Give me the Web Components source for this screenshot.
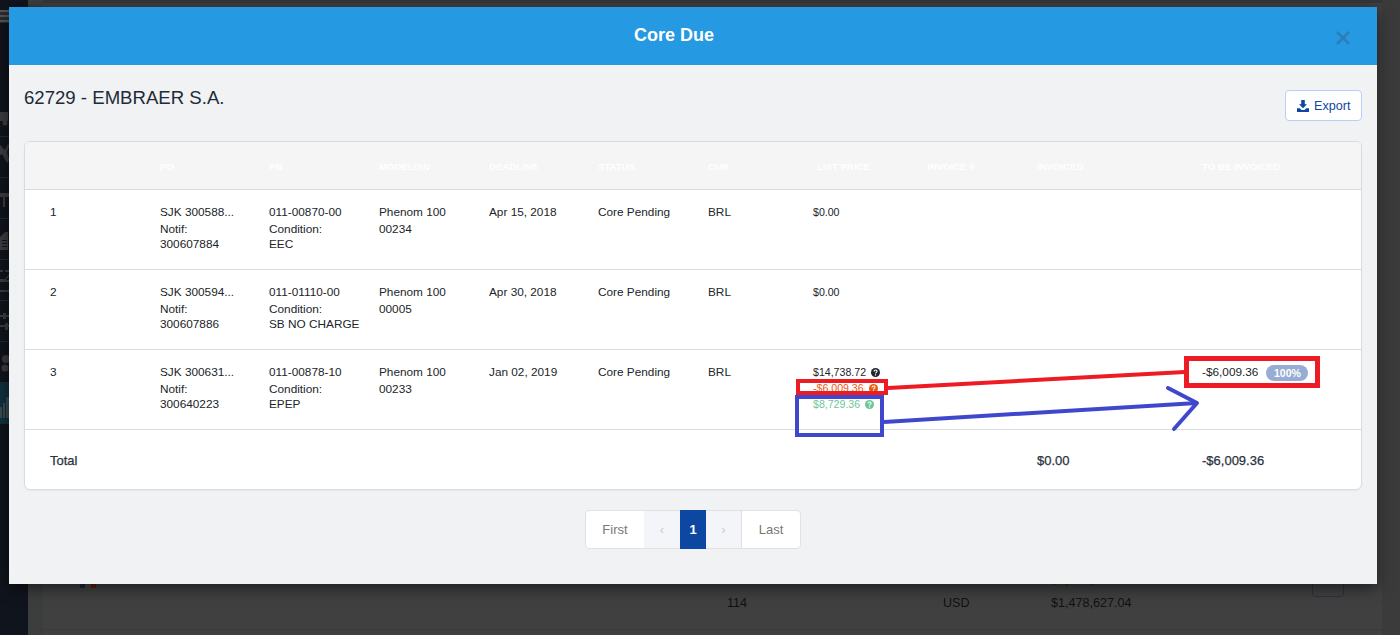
<!DOCTYPE html>
<html lang="en">
<head>
<meta charset="utf-8">
<title>Core Due</title>
<style>
    html, body { margin: 0; height: 100%; overflow: hidden; }
    body { font-family: "Liberation Sans", Arial, sans-serif; background: #404040; }
</style>
</head>
<body>
<app-backdrop>
    <side-item slot="side" shape="truck"></side-item>
    <side-item slot="side" shape="plane"></side-item>
    <side-item slot="side" shape="tool"></side-item>
    <side-item slot="side" shape="doc"></side-item>
    <side-item slot="side" shape="swap"></side-item>
    <side-item slot="side" shape="sliders"></side-item>
    <side-item slot="side" shape="gears"></side-item>
    <side-item slot="side" shape="chart" active></side-item>
</app-backdrop>

<core-modal heading="Core Due">
    <modal-toolbar title-text="62729 - EMBRAER S.A."></modal-toolbar>
    <core-card>
        <core-row kind="head">
            <row-cell></row-cell>
            <row-cell>PO</row-cell>
            <row-cell>PN</row-cell>
            <row-cell>Model/SN</row-cell>
            <row-cell>Deadline</row-cell>
            <row-cell>Status</row-cell>
            <row-cell>Cur</row-cell>
            <row-cell inset>List price</row-cell>
            <row-cell>Invoice #</row-cell>
            <row-cell>Invoiced</row-cell>
            <row-cell>To be invoiced</row-cell>
        </core-row>
        <core-row>
            <row-cell>1</row-cell>
            <row-cell>SJK 300588...<span slot="sub">Notif:<br>300607884</span></row-cell>
            <row-cell>011-00870-00<span slot="sub">Condition:<br>EEC</span></row-cell>
            <row-cell>Phenom 100<span slot="sub">00234</span></row-cell>
            <row-cell>Apr 15, 2018</row-cell>
            <row-cell>Core Pending</row-cell>
            <row-cell>BRL</row-cell>
            <row-cell compact><price-line plain>$0.00</price-line></row-cell>
            <row-cell></row-cell>
            <row-cell></row-cell>
            <row-cell></row-cell>
        </core-row>
        <core-row>
            <row-cell>2</row-cell>
            <row-cell>SJK 300594...<span slot="sub">Notif:<br>300607886</span></row-cell>
            <row-cell>011-01110-00<span slot="sub">Condition:<br>SB NO CHARGE</span></row-cell>
            <row-cell>Phenom 100<span slot="sub">00005</span></row-cell>
            <row-cell>Apr 30, 2018</row-cell>
            <row-cell>Core Pending</row-cell>
            <row-cell>BRL</row-cell>
            <row-cell compact><price-line plain>$0.00</price-line></row-cell>
            <row-cell></row-cell>
            <row-cell></row-cell>
            <row-cell></row-cell>
        </core-row>
        <core-row>
            <row-cell>3</row-cell>
            <row-cell>SJK 300631...<span slot="sub">Notif:<br>300640223</span></row-cell>
            <row-cell>011-00878-10<span slot="sub">Condition:<br>EPEP</span></row-cell>
            <row-cell>Phenom 100<span slot="sub">00233</span></row-cell>
            <row-cell>Jan 02, 2019</row-cell>
            <row-cell>Core Pending</row-cell>
            <row-cell>BRL</row-cell>
            <row-cell compact>
                <price-line color="#212529">$14,738.72</price-line>
                <price-line color="#e8590c">-$6,009.36</price-line>
                <price-line color="#6cc797">$8,729.36</price-line>
            </row-cell>
            <row-cell></row-cell>
            <row-cell></row-cell>
            <row-cell>-$6,009.36<percent-badge>100%</percent-badge></row-cell>
        </core-row>
        <core-row kind="total">
            <row-cell>Total</row-cell>
            <row-cell></row-cell>
            <row-cell></row-cell>
            <row-cell></row-cell>
            <row-cell></row-cell>
            <row-cell></row-cell>
            <row-cell></row-cell>
            <row-cell></row-cell>
            <row-cell></row-cell>
            <row-cell>$0.00</row-cell>
            <row-cell>-$6,009.36</row-cell>
        </core-row>
    </core-card>
    <page-pager></page-pager>
</core-modal>

<mark-up></mark-up>

<script>
    const shapes = {
        truck: '<rect x="-3" y="16" width="11" height="9"/><circle cx="5" cy="27" r="2.5"/>',
        plane: '<path d="M-2 6l7 7 3-6 1 2-2 6 2 8-2 3-5-9-4 3z"/>',
        tool: '<path d="M-2 15h11v4H5v10H3V19H-2z"/>',
        doc: '<path d="M0 18l5-5h3v18H0zM2 21v1h5v-1zM2 24v1h5v-1zM2 27v1h5v-1z" fill-rule="evenodd"/>',
        swap: '<path d="M-1 10h4v2H-1zM5 10h4v2H5zM-1 19h6l4-5v2l-3 4h3v2H-1zM-1 30h10v2H-1z"/>',
        sliders: '<path d="M-1 14h4v-2h3v2h3v2H6v2H3v-2H-1zM-1 24h6v-2h3v2h1v2H8v3H5v-3h-6z"/>',
        gears: '<circle cx="6" cy="17" r="4"/><circle cx="5" cy="26" r="3.5"/>',
        chart: '<path d="M0 24h2v11H0zM3 20h2v15H3zM6 14h3v21H6z"/>'
    };

    class AppBackdrop extends HTMLElement {
        constructor() {
            super();
            this.attachShadow({ mode: 'open' });
            this.shadowRoot.innerHTML = `
                <style>
                    :host { display: flex; height: 635px; color: #111; font-size: 12.6px; line-height: 15px; }
                    .rail { width: 28px; background: #10141c; display: flex; flex-direction: column; padding-top: 96px; box-sizing: border-box; position: relative; }
                    .burger { position: absolute; left: 0; top: 10px; width: 9px; height: 13px; background: repeating-linear-gradient(#555 0 2px, #2a2c30 2px 5px); }
                    .gutter { width: 15px; background: #3b3e3d; }
                    .main { width: 1339px; display: flex; flex-direction: column; }
                    .top { height: 3px; background: #34363b; }
                    .page { flex: 1; padding-top: 570px; box-sizing: border-box; }
                    .line { display: grid; grid-template-columns: 684px 216px 108px 261px 32px; height: 23px; }
                    .who { display: flex; padding-left: 37px; }
                    .flag { width: 16px; height: 11px; margin: 4px 6px 0 0; background: linear-gradient(90deg, #23233c 33%, #444 33% 66%, #5a1d10 66%); }
                    .drop { width: 32px; height: 30px; margin-top: -6px; border: 1px solid #2b3040; border-radius: 3px; box-sizing: border-box; display: flex; align-items: center; justify-content: center; }
                    .drop i { border: 4px solid transparent; border-top: 5px solid #14181f; border-bottom: 0; }
                    .rule { border-top: 1px solid #3a3a3a; margin-top: 10px; }
                    .edge { flex: 1; background: #3b3b3b; }
                </style>
                <div class="rail"><div class="burger"></div><slot name="side"></slot></div>
                <div class="gutter"></div>
                <div class="main">
                    <div class="top"></div>
                    <div class="page">
                        <div class="line">
                            <div class="who"><span class="flag"></span><span>62729 - Embraer Aviation International SAS</span></div>
                            <span>116</span><span>USD</span><span>$1,531,120.08</span>
                            <span class="drop"><i></i></span>
                        </div>
                        <div class="line">
                            <span style="grid-column: 2">114</span><span>USD</span><span>$1,478,627.04</span>
                        </div>
                        <div class="rule"></div>
                    </div>
                </div>
                <div class="edge"></div>
            `;
        }
    }

    class SideItem extends HTMLElement {
        constructor() {
            super();
            this.attachShadow({ mode: 'open' });
        }
        connectedCallback() {
            const shape = shapes[this.getAttribute('shape')] || '';
            const active = this.hasAttribute('active');
            this.shadowRoot.innerHTML = `
                <style>
                    :host { display: block; height: 41px; box-sizing: border-box; border-bottom: 1px solid ${active ? 'transparent' : '#24272d'}; background: ${active ? '#10303f' : 'transparent'}; }
                    svg { display: block; fill: ${active ? '#3d4a50' : '#3b3c3f'}; }
                </style>
                <svg width="9" height="40" viewBox="0 0 9 40">${shape}</svg>
            `;
        }
    }

    class CoreModal extends HTMLElement {
        constructor() {
            super();
            this.attachShadow({ mode: 'open' });
        }
        connectedCallback() {
            this.shadowRoot.innerHTML = `
                <style>
                    :host { display: block; position: absolute; left: 9px; top: 7px; width: 1368px; background: #f1f2f4; box-shadow: 0 4px 14px rgba(0, 0, 0, .55); }
                    header { display: flex; align-items: center; height: 58px; background: #2699e3; color: #fff; }
                    h1 { flex: 1; margin: 0; text-align: center; font-size: 18px; font-weight: 700; line-height: 56px; height: 58px; }
                    .close { width: 38px; height: 58px; display: flex; align-items: center; padding-top: 4px; box-sizing: border-box; margin-left: -3px; margin-right: 3px; }
                    .body { padding: 25px 15px 35px; }
                </style>
                <header>
                    <h1>${this.getAttribute('heading')}</h1>
                    <div class="close">
                        <svg width="14" height="14" viewBox="0 0 14 14"><path d="M1 1l12 12M13 1L1 13" stroke="#2c7db9" stroke-width="2.6" fill="none"/></svg>
                    </div>
                </header>
                <div class="body"><slot></slot></div>
            `;
        }
    }

    class ModalToolbar extends HTMLElement {
        constructor() {
            super();
            this.attachShadow({ mode: 'open' });
        }
        connectedCallback() {
            this.shadowRoot.innerHTML = `
                <style>
                    :host { display: flex; justify-content: space-between; align-items: flex-start; margin-bottom: 20px; }
                    h2 { margin: 0; font-size: 18.6px; font-weight: 400; line-height: 16px; color: #212a37; }
                    button { display: flex; align-items: center; gap: 5px; box-sizing: border-box; width: 77px; height: 31px; padding: 0 0 0 11px; background: #fff; border: 1px solid #b7cff5; border-radius: 4px; color: #0d47a1; font: 12.6px "Liberation Sans", Arial, sans-serif; }
                    svg { fill: #0d47a1; }
                </style>
                <h2>${this.getAttribute('title-text')}</h2>
                <button>
                    <svg width="12" height="12" viewBox="0 0 12 12"><path d="M4.2 0h3.6v4.2H10L6 8.2 2 4.2h2.2zM0 8.2h2.8L4.6 10h2.8l1.8-1.8H12V12H0z"/></svg>
                    Export
                </button>
            `;
        }
    }

    class CoreCard extends HTMLElement {
        constructor() {
            super();
            this.attachShadow({ mode: 'open' });
            this.shadowRoot.innerHTML = `
                <style>
                    :host { display: block; background: #fff; border: 1px solid #d8dbe6; border-radius: 6px; overflow: hidden; box-shadow: 0 1px 2px rgba(0, 0, 0, .04); }
                </style>
                <slot></slot>
            `;
        }
    }

    class CoreRow extends HTMLElement {
        constructor() {
            super();
            this.attachShadow({ mode: 'open' });
        }
        connectedCallback() {
            const kind = this.getAttribute('kind');
            let extra = 'height: 80px; padding-top: 15px; border-bottom: 1px solid #d8dce6; font-size: 11.8px; line-height: 15px; color: #212529;';
            if (kind === 'head') {
                extra = 'height: 48px; padding-top: 3px; align-items: center; background: #f5f5f5; border-bottom: 1px solid #d8dbe6; font-size: 9.6px; font-weight: 700; text-transform: uppercase; color: #fff;';
            }
            if (kind === 'total') {
                extra = 'height: 59px; padding-top: 3px; align-items: center; font-size: 13px; color: #2b3240; -webkit-text-stroke: 0.25px #2b3240;';
            }
            this.shadowRoot.innerHTML = `
                <style>
                    :host { display: grid; grid-template-columns: 110px 109px 110px 110px 109px 110px 105px 114px 110px 165px 184px; box-sizing: border-box; ${extra} }
                </style>
                <slot></slot>
            `;
        }
    }

    class RowCell extends HTMLElement {
        constructor() {
            super();
            this.attachShadow({ mode: 'open' });
            this.shadowRoot.innerHTML = `
                <style>
                    :host { display: block; padding-left: 25px; white-space: nowrap; }
                    :host([inset]) { padding-left: 29px; }
                    .sub { margin-top: 2px; }
                </style>
                <div><slot></slot></div>
                <div class="sub"><slot name="sub"></slot></div>
            `;
        }
    }

    class PriceLine extends HTMLElement {
        constructor() {
            super();
            this.attachShadow({ mode: 'open' });
        }
        connectedCallback() {
            const color = this.getAttribute('color') || '#212529';
            const icon = this.hasAttribute('plain') ? '' : `
                <svg width="9" height="9" viewBox="0 0 9 9">
                    <circle cx="4.5" cy="4.5" r="4.5" fill="${color}"/>
                    <path d="M3 3.5c0-2 3-2 3-.2C6 4.4 4.5 4.3 4.5 5.6" stroke="#fff" stroke-width="1.1" fill="none"/>
                    <rect x="3.9" y="6.3" width="1.2" height="1.2" fill="#fff"/>
                </svg>`;
            this.shadowRoot.innerHTML = `
                <style>
                    :host { display: flex; align-items: center; gap: 5px; height: 16px; margin-top: -1px; margin-bottom: 1px; font-size: 10.6px; color: ${color}; }
                </style>
                <slot></slot>${icon}
            `;
        }
    }

    class PercentBadge extends HTMLElement {
        constructor() {
            super();
            this.attachShadow({ mode: 'open' });
            this.shadowRoot.innerHTML = `
                <style>
                    :host { display: inline-block; width: 42px; height: 16px; margin-left: 8px; border-radius: 8px; background: #97add3; color: #fff; font-size: 10.5px; font-weight: 700; line-height: 16px; text-align: center; vertical-align: top; }
                </style>
                <slot></slot>
            `;
        }
    }

    class PagePager extends HTMLElement {
        constructor() {
            super();
            this.attachShadow({ mode: 'open' });
            this.shadowRoot.innerHTML = `
                <style>
                    :host { display: flex; justify-content: center; margin-top: 20px; }
                    .pager { display: flex; height: 39px; box-sizing: border-box; border: 1px solid #dfe1e6; border-radius: 4px; background: #fff; font-size: 13px; color: #777; }
                    .pager > div { display: flex; align-items: center; justify-content: center; }
                    .first { width: 58px; }
                    .last { width: 59px; border-left: 1px solid #dfe1e6; box-sizing: border-box; }
                    .step { background: #f4f5f8; color: #c8cad0; }
                    .prev { width: 36px; }
                    .next { width: 35px; }
                    .now { width: 26px; margin: -1px 0; background: #0d47a1; color: #fff; font-weight: 700; }
                </style>
                <div class="pager">
                    <div class="first">First</div>
                    <div class="step prev">‹</div>
                    <div class="now">1</div>
                    <div class="step next">›</div>
                    <div class="last">Last</div>
                </div>
            `;
        }
    }

    class MarkUp extends HTMLElement {
        constructor() {
            super();
            this.attachShadow({ mode: 'open' });
            this.shadowRoot.innerHTML = `
                <style>
                    :host { display: block; position: absolute; left: 0; top: 0; pointer-events: none; }
                    svg { display: block; fill: none; }
                    .red { stroke: #ed1c24; }
                    .blue { stroke: #3f48cc; }
                </style>
                <svg width="1400" height="635">
                    <rect class="red" x="798" y="381" width="88" height="12" stroke-width="4"/>
                    <path class="red" d="M888 388L1185 372" stroke-width="4"/>
                    <rect class="red" x="1186.5" y="358.5" width="131" height="27" stroke-width="5"/>
                    <rect class="blue" x="797" y="397" width="85" height="38" stroke-width="4"/>
                    <path class="blue" d="M884 422L1197 403" stroke-width="4"/>
                    <path class="blue" d="M1168 388L1197 403L1174 429" stroke-width="4" stroke-linecap="round" stroke-linejoin="round"/>
                </svg>
            `;
        }
    }

    customElements.define('app-backdrop', AppBackdrop);
    customElements.define('side-item', SideItem);
    customElements.define('core-modal', CoreModal);
    customElements.define('modal-toolbar', ModalToolbar);
    customElements.define('core-card', CoreCard);
    customElements.define('core-row', CoreRow);
    customElements.define('row-cell', RowCell);
    customElements.define('price-line', PriceLine);
    customElements.define('percent-badge', PercentBadge);
    customElements.define('page-pager', PagePager);
    customElements.define('mark-up', MarkUp);
</script>
</body>
</html>
